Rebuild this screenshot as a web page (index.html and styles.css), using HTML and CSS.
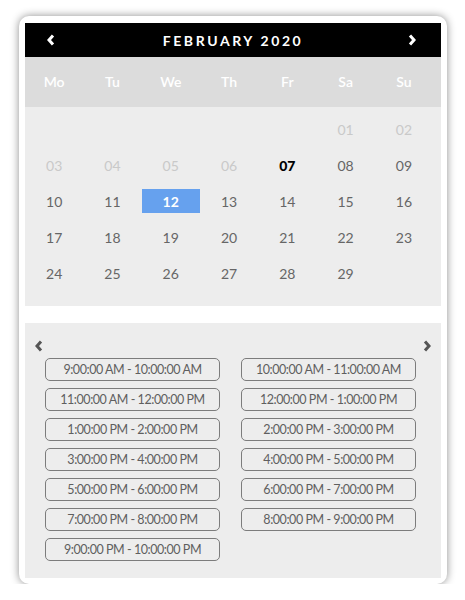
FILE: index.html
```html
<!DOCTYPE html>
<html>
<head>
<meta charset="utf-8">
<link rel="stylesheet" href="styles.css">
</head>
<body>
<div class="card">
  <div class="month-bar">
    <svg class="hchev" width="8" height="12" viewBox="0 0 8 12"><polyline points="6,1.5 2,6 6,10.5" fill="none" stroke="#fff" stroke-width="3" stroke-linejoin="miter" stroke-linecap="butt"/></svg>
    <span class="month-title">FEBRUARY 2020</span>
    <svg class="hchev" width="8" height="12" viewBox="0 0 8 12"><polyline points="2,1.5 6,6 2,10.5" fill="none" stroke="#fff" stroke-width="3" stroke-linejoin="miter" stroke-linecap="butt"/></svg>
  </div>
  <div class="weekdays">
    <span>Mo</span><span>Tu</span><span>We</span><span>Th</span><span>Fr</span><span>Sa</span><span>Su</span>
  </div>
  <div class="dates">
    <span></span><span></span><span></span><span></span><span></span>
    <span class="off">01</span><span class="off">02</span>
    <span class="off">03</span><span class="off">04</span><span class="off">05</span><span class="off">06</span>
    <span class="today">07</span><span>08</span><span>09</span>
    <span>10</span><span>11</span><span class="sel">12</span><span>13</span><span>14</span><span>15</span><span>16</span>
    <span>17</span><span>18</span><span>19</span><span>20</span><span>21</span><span>22</span><span>23</span>
    <span>24</span><span>25</span><span>26</span><span>27</span><span>28</span><span>29</span><span></span>
  </div>
  <div class="times">
    <div class="times-nav">
      <svg width="8" height="12" viewBox="0 0 8 12"><polyline points="6,1.5 2,6 6,10.5" fill="none" stroke="#555" stroke-width="3"/></svg>
      <svg width="8" height="12" viewBox="0 0 8 12"><polyline points="2,1.5 6,6 2,10.5" fill="none" stroke="#555" stroke-width="3"/></svg>
    </div>
    <div class="slots">
      <div class="slot">9:00:00 AM - 10:00:00 AM</div>
      <div class="slot">10:00:00 AM - 11:00:00 AM</div>
      <div class="slot">11:00:00 AM - 12:00:00 PM</div>
      <div class="slot">12:00:00 PM - 1:00:00 PM</div>
      <div class="slot">1:00:00 PM - 2:00:00 PM</div>
      <div class="slot">2:00:00 PM - 3:00:00 PM</div>
      <div class="slot">3:00:00 PM - 4:00:00 PM</div>
      <div class="slot">4:00:00 PM - 5:00:00 PM</div>
      <div class="slot">5:00:00 PM - 6:00:00 PM</div>
      <div class="slot">6:00:00 PM - 7:00:00 PM</div>
      <div class="slot">7:00:00 PM - 8:00:00 PM</div>
      <div class="slot">8:00:00 PM - 9:00:00 PM</div>
      <div class="slot">9:00:00 PM - 10:00:00 PM</div>
    </div>
  </div>
</div>
</body>
</html>
```
FILE: styles.css
```css
html, body {
  margin: 0;
  padding: 0;
  background: #fff;
}
body {
  font-family: Lato, "Liberation Sans", sans-serif;
  padding: 16px 0 0 19px;
}
.card {
  width: 416px;
  padding: 7px 6px 6px 6px;
  background: #fff;
  border-radius: 10px;
  box-shadow: 0 0 9px rgba(0, 0, 0, 0.45);
}
.month-bar {
  height: 34px;
  background: #000;
  display: flex;
  align-items: center;
  justify-content: space-between;
  padding: 0 25px 0 22px;
}
.hchev { display: block; }
.month-title {
  color: #fff;
  font-weight: 700;
  font-size: 14px;
  letter-spacing: 2.6px;
  margin-left: 3px;
}
.weekdays {
  height: 50px;
  background: #dcdcdc;
  display: grid;
  grid-template-columns: repeat(7, 58.3px);
  align-items: center;
}
.weekdays span {
  text-align: center;
  color: #fff;
  font-weight: 600;
  font-size: 14px;
  line-height: 48px;
}
.dates {
  background: #ededed;
  display: grid;
  grid-template-columns: repeat(7, 58.3px);
  grid-auto-rows: 24px;
  row-gap: 12px;
  padding: 10px 0 21px 0;
}
.dates span {
  display: flex;
  align-items: center;
  justify-content: center;
  font-size: 14px;
  color: #666;
}
.dates span.off { color: #c9c9c9; }
.dates span.today { color: #000; font-weight: 900; }
.dates span.sel {
  background: #66a1ee;
  color: #fff;
  font-weight: 700;
}
.times {
  margin-top: 17px;
  background: #ededed;
  padding: 13px 0 17px 0;
}
.times-nav {
  height: 20px;
  display: flex;
  align-items: center;
  justify-content: space-between;
  padding: 0 10px 0 10px;
}
.times-nav svg { display: block; }
.slots {
  margin-top: 2px;
  padding-left: 20px;
  display: grid;
  grid-template-columns: 175px 175px;
  column-gap: 21px;
  row-gap: 7px;
}
.slot {
  box-sizing: border-box;
  height: 23px;
  border: 1px solid #7c7c7c;
  border-radius: 5px;
  font-size: 12.5px;
  letter-spacing: -0.45px;
  color: #5f5f5f;
  display: flex;
  align-items: center;
  justify-content: center;
}
```
